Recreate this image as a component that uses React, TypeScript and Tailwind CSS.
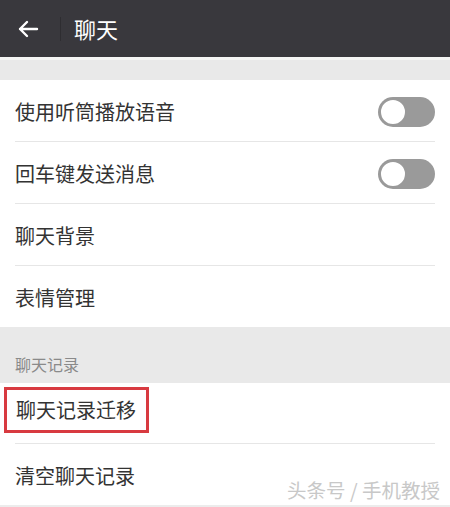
import type { ReactNode } from "react";

const font = { fontFamily: '"Noto Sans CJK SC", "Noto Sans", sans-serif' };

function Toggle() {
  return (
    <div className="flex h-[30px] w-[57px] items-center rounded-full bg-[#9a9a9a] pl-[1px]">
      <div className="h-[28px] w-[28px] rounded-full border-[2px] border-[#9a9a9a] bg-white" />
    </div>
  );
}

function Row({
  label,
  right,
  divider = true,
}: {
  label: ReactNode;
  right?: ReactNode;
  divider?: boolean;
}) {
  return (
    <div className="bg-white">
      <div className="flex h-[61px] items-center justify-between pl-[15px] pr-[15px] pt-[3px]">
        <span className="text-[20px] text-[#333]">{label}</span>
        {right}
      </div>
      {divider && <div className="ml-[15px] mr-[15px] h-[1px] bg-[#e6e6e6]" />}
    </div>
  );
}

export default function App() {
  return (
    <div className="relative h-[507px] w-[450px] overflow-hidden bg-white" style={font}>
      <header className="flex h-[57px] items-center bg-[#39383d]">
        <svg width="22" height="18" viewBox="0 0 22 18" className="ml-[17px]">
          <path
            d="M20 9H3M10 2L3 9l7 7"
            fill="none"
            stroke="white"
            strokeWidth="2.4"
            strokeLinecap="round"
            strokeLinejoin="round"
          />
        </svg>
        <div className="ml-[21px] h-[24px] w-[1px] bg-[#2e2d31]" />
        <h1 className="ml-[13px] text-[22px] text-white">聊天</h1>
      </header>
      <div className="h-[3px] bg-[#f5f5f5]" />
      <div className="h-[20px] bg-[#e9e9e9]" />

      <Row label="使用听筒播放语音" right={<Toggle />} />
      <Row label="回车键发送消息" right={<Toggle />} />
      <Row label="聊天背景" />
      <Row label="表情管理" divider={false} />

      <div className="flex h-[56px] items-end bg-[#e9e9e9] pb-[7px] pl-[15px]">
        <span className="text-[16px] text-[#8a8a8a]">聊天记录</span>
      </div>

      <div className="bg-white">
        <div className="flex h-[60px] items-start pl-[4px] pt-[4px]">
          <div className="flex h-[46px] items-center border-[3px] border-[#d83a40] pl-[9px] pr-[10px]">
            <span className="text-[20px] text-[#333]">聊天记录迁移</span>
          </div>
        </div>
        <div className="ml-[15px] mr-[15px] h-[1px] bg-[#e6e6e6]" />
      </div>
      <Row label="清空聊天记录" divider={false} />
      <div className="h-[3px] bg-[#ececec]" />

      <div className="absolute bottom-[3px] right-[10px] text-[19.5px] text-[#c8c8c8]">
        头条号 / 手机教授
      </div>
    </div>
  );
}
